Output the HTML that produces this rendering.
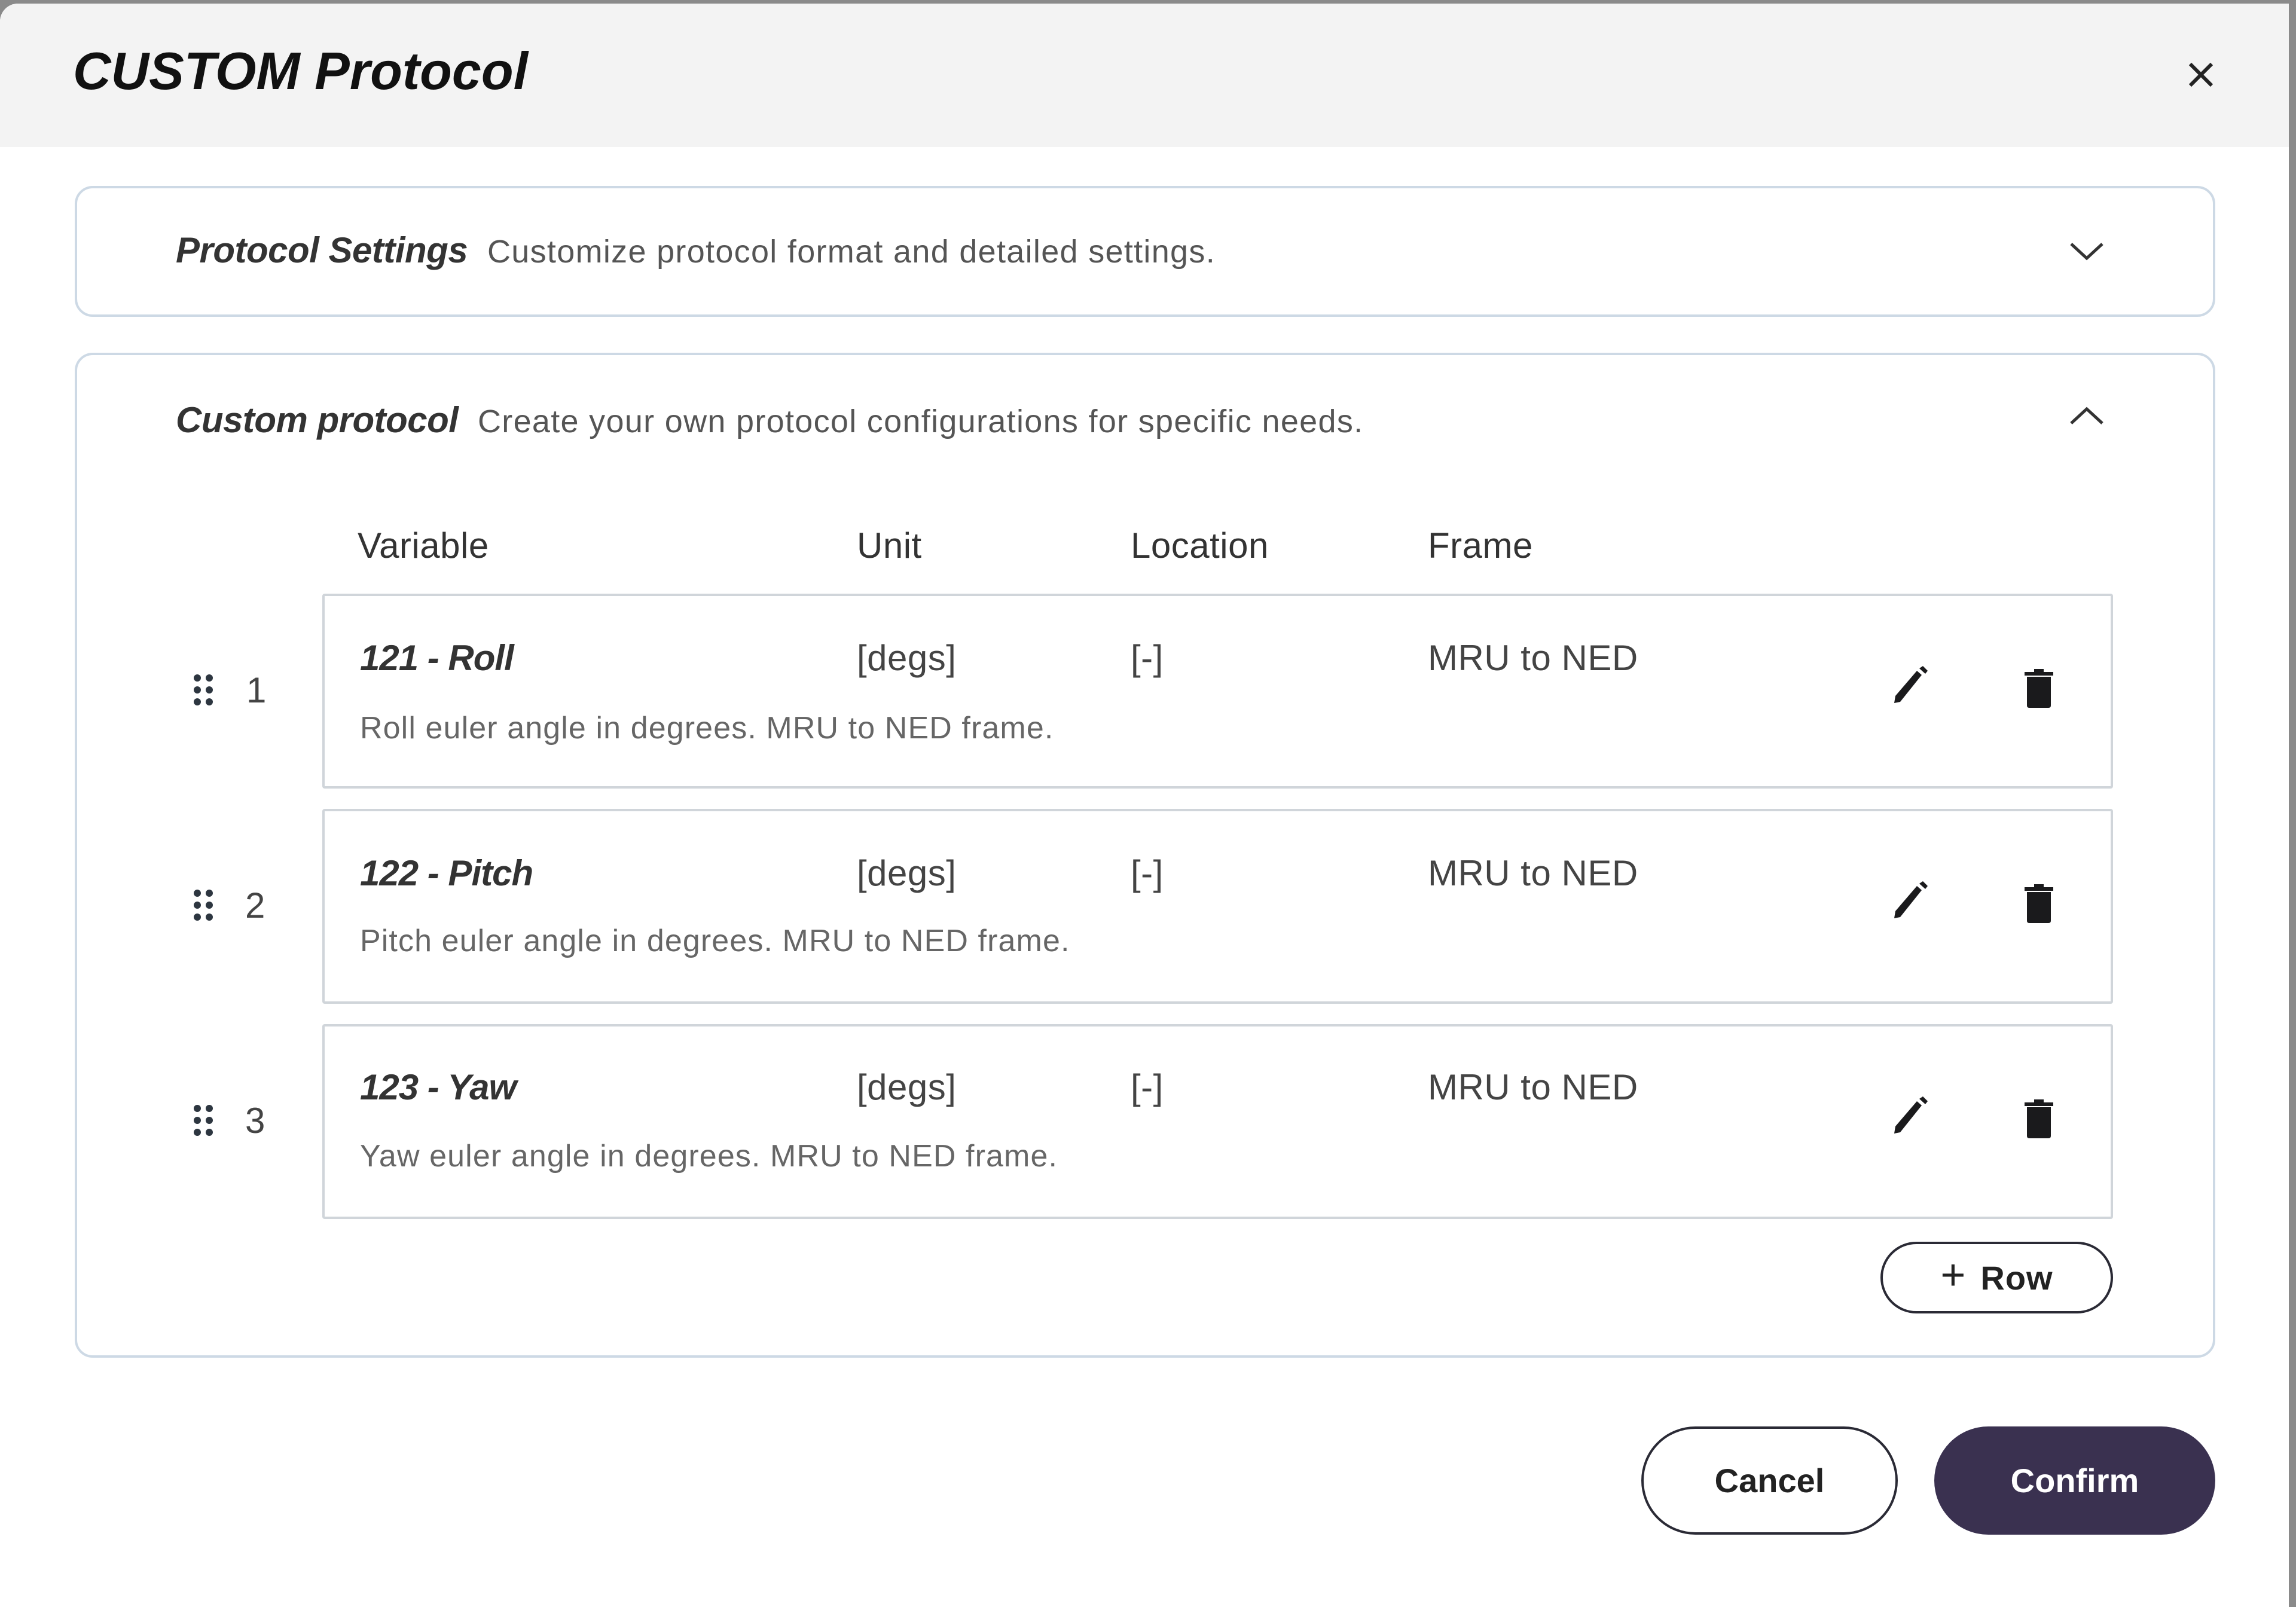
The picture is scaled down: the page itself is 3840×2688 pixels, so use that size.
<!DOCTYPE html>
<html><head><meta charset="utf-8"><style>
*{margin:0;padding:0;box-sizing:border-box}
body{width:3840px;height:2688px;background:#8a8a8a;font-family:"Liberation Sans",sans-serif;position:relative;overflow:hidden;color:#222}
.dlg{position:absolute;left:0;top:6px;width:3828px;height:2682px;background:#fff;border-top-left-radius:30px;overflow:hidden}
.hdr{position:absolute;left:0;top:0;width:100%;height:240px;background:#f3f3f3}
.t{position:absolute;white-space:nowrap}
.panel{position:absolute;left:125px;width:3580px;border:4px solid #cdd9e5;border-radius:30px;background:#fff}
.row{position:absolute;left:539px;width:2995px;height:326px;border:4px solid #d0d5da;border-radius:4px;background:#fff}
.h{font-size:60px;color:#333;letter-spacing:0.5px}
.ttl{font-size:60px;font-weight:bold;font-style:italic;color:#333;letter-spacing:-0.5px}
.rt{font-size:60px;font-weight:bold;font-style:italic;color:#333;letter-spacing:-1px}
.desc{font-size:54px;color:#555;letter-spacing:1.3px}
.rd{font-size:52px;color:#666;letter-spacing:1.1px}
.val{font-size:60px;color:#444;letter-spacing:0.5px}
.btn{position:absolute;border-radius:100px;font-weight:bold;font-size:56px;display:flex;align-items:center;justify-content:center}
</style></head><body>
<div class="dlg">
<div class="hdr"></div>
<div class="t" style="left:122px;top:62px;font-size:88px;font-style:italic;font-weight:bold;color:#111;letter-spacing:0px">CUSTOM Protocol</div>
<svg class="t" style="left:3657px;top:95px" width="48" height="48" viewBox="0 0 48 48"><path d="M6 6L42 42M42 6L6 42" stroke="#222" stroke-width="6"/></svg>

<div class="panel" style="top:305px;height:219px"></div>
<div class="t ttl" style="left:294px;top:378px">Protocol Settings</div>
<div class="t desc" style="left:815px;top:384px">Customize protocol format and detailed settings.</div>
<svg class="t" style="left:3460px;top:396px" width="60" height="36" viewBox="0 0 60 36"><path d="M4 6L30 30L56 6" stroke="#333" stroke-width="5" fill="none"/></svg>

<div class="panel" style="top:584px;height:1681px"></div>
<div class="t ttl" style="left:294px;top:662px">Custom protocol</div>
<div class="t desc" style="left:799px;top:668px">Create your own protocol configurations for specific needs.</div>
<svg class="t" style="left:3460px;top:672px" width="60" height="36" viewBox="0 0 60 36"><path d="M4 30L30 6L56 30" stroke="#333" stroke-width="5" fill="none"/></svg>

<div class="t h" style="left:598px;top:872px">Variable</div>
<div class="t h" style="left:1433px;top:872px">Unit</div>
<div class="t h" style="left:1891px;top:872px">Location</div>
<div class="t h" style="left:2388px;top:872px">Frame</div>

<div class="row" style="top:987px"></div>
<div class="row" style="top:1347px"></div>
<div class="row" style="top:1707px"></div>

<svg class="t" style="left:320px;top:1118px" width="40" height="60" viewBox="0 0 40 60"><g fill="#2d3640"><circle cx="10" cy="10" r="6"/><circle cx="30" cy="10" r="6"/><circle cx="10" cy="30" r="6"/><circle cx="30" cy="30" r="6"/><circle cx="10" cy="50" r="6"/><circle cx="30" cy="50" r="6"/></g></svg>
<div class="t val" style="left:412px;top:1114px">1</div>
<div class="t rt" style="left:602px;top:1060px">121 - Roll</div>
<div class="t val" style="left:1433px;top:1060px">[degs]</div>
<div class="t val" style="left:1891px;top:1060px">[-]</div>
<div class="t val" style="left:2388px;top:1060px">MRU to NED</div>
<div class="t rd" style="left:602px;top:1182px">Roll euler angle in degrees. MRU to NED frame.</div>

<svg class="t" style="left:320px;top:1478px" width="40" height="60" viewBox="0 0 40 60"><g fill="#2d3640"><circle cx="10" cy="10" r="6"/><circle cx="30" cy="10" r="6"/><circle cx="10" cy="30" r="6"/><circle cx="30" cy="30" r="6"/><circle cx="10" cy="50" r="6"/><circle cx="30" cy="50" r="6"/></g></svg>
<div class="t val" style="left:410px;top:1474px">2</div>
<div class="t rt" style="left:602px;top:1420px">122 - Pitch</div>
<div class="t val" style="left:1433px;top:1420px">[degs]</div>
<div class="t val" style="left:1891px;top:1420px">[-]</div>
<div class="t val" style="left:2388px;top:1420px">MRU to NED</div>
<div class="t rd" style="left:602px;top:1538px">Pitch euler angle in degrees. MRU to NED frame.</div>

<svg class="t" style="left:320px;top:1838px" width="40" height="60" viewBox="0 0 40 60"><g fill="#2d3640"><circle cx="10" cy="10" r="6"/><circle cx="30" cy="10" r="6"/><circle cx="10" cy="30" r="6"/><circle cx="30" cy="30" r="6"/><circle cx="10" cy="50" r="6"/><circle cx="30" cy="50" r="6"/></g></svg>
<div class="t val" style="left:410px;top:1834px">3</div>
<div class="t rt" style="left:602px;top:1778px">123 - Yaw</div>
<div class="t val" style="left:1433px;top:1778px">[degs]</div>
<div class="t val" style="left:1891px;top:1778px">[-]</div>
<div class="t val" style="left:2388px;top:1778px">MRU to NED</div>
<div class="t rd" style="left:602px;top:1898px">Yaw euler angle in degrees. MRU to NED frame.</div>

<svg class="t" style="left:3160px;top:1108px" width="72" height="72" viewBox="0 0 72 72"><path d="M8 62L10 50L46 8L54 15L18 60Z" fill="#1a1a1c"/><path d="M50 4L56 0L64 8L60 13Z" fill="#1a1a1c"/></svg>
<svg class="t" style="left:3382px;top:1110px" width="56" height="70" viewBox="0 0 56 70"><path d="M4 8H52V14H4Z M20 3H36V8H20Z M8 16H48V64Q48 68 44 68H12Q8 68 8 64Z" fill="#1a1a1c"/></svg>
<svg class="t" style="left:3160px;top:1468px" width="72" height="72" viewBox="0 0 72 72"><path d="M8 62L10 50L46 8L54 15L18 60Z" fill="#1a1a1c"/><path d="M50 4L56 0L64 8L60 13Z" fill="#1a1a1c"/></svg>
<svg class="t" style="left:3382px;top:1470px" width="56" height="70" viewBox="0 0 56 70"><path d="M4 8H52V14H4Z M20 3H36V8H20Z M8 16H48V64Q48 68 44 68H12Q8 68 8 64Z" fill="#1a1a1c"/></svg>
<svg class="t" style="left:3160px;top:1828px" width="72" height="72" viewBox="0 0 72 72"><path d="M8 62L10 50L46 8L54 15L18 60Z" fill="#1a1a1c"/><path d="M50 4L56 0L64 8L60 13Z" fill="#1a1a1c"/></svg>
<svg class="t" style="left:3382px;top:1830px" width="56" height="70" viewBox="0 0 56 70"><path d="M4 8H52V14H4Z M20 3H36V8H20Z M8 16H48V64Q48 68 44 68H12Q8 68 8 64Z" fill="#1a1a1c"/></svg>

<div class="btn" style="left:3145px;top:2071px;width:389px;height:120px;border:4px solid #2a2a35;color:#222;font-size:56px;letter-spacing:1px"><span style="font-size:72px;font-weight:normal;margin-right:24px;margin-top:-8px">+</span>Row</div>

<div class="btn" style="left:2745px;top:2380px;width:429px;height:181px;border:4px solid #2a2a35;color:#222">Cancel</div>
<div class="btn" style="left:3235px;top:2380px;width:470px;height:181px;background:#3a3150;color:#fff">Confirm</div>
</div>
</body></html>
